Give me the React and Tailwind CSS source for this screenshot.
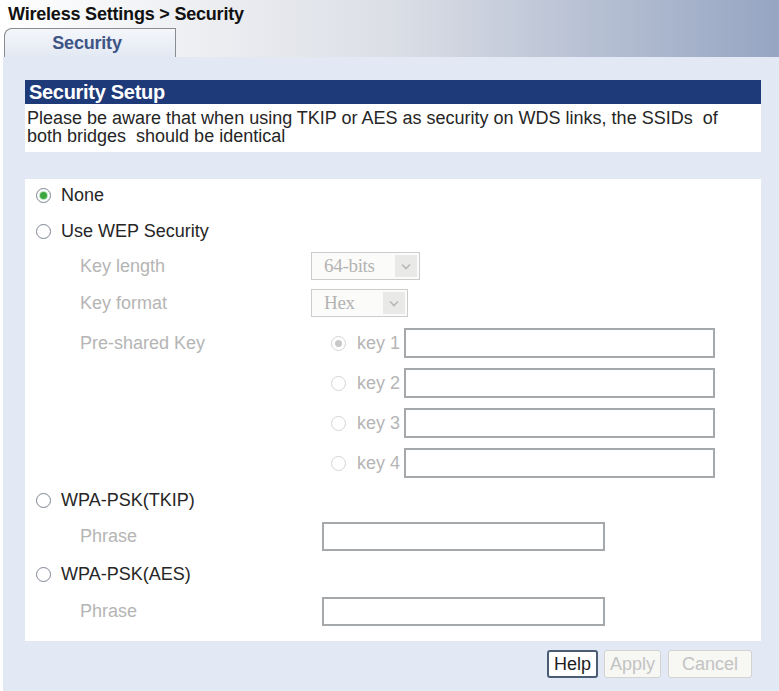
import React from 'react'

// Radio bullet, drawn with CSS so we can match the old XP look
function Radio({ checked = false, disabled = false }) {
  return (
    <span
      className={
        'flex items-center justify-center w-[15px] h-[15px] rounded-full border bg-white shrink-0 ' +
        (disabled ? 'border-[#d2d4d6]' : 'border-[#7d8593]')
      }
    >
      {checked && (
        <span
          className={
            'block w-[7px] h-[7px] rounded-full ' +
            (disabled ? 'bg-[#c9c9c9]' : 'bg-[#3da63d] shadow-[0_0_0_1px_#bfe3bf]')
          }
        />
      )}
    </span>
  )
}

function DisabledSelect({ value, width }) {
  return (
    <div className={'flex items-stretch h-[28px] border border-[#cbcccd] bg-[#fbfbf9] ' + width}>
      <span className="flex-1 flex items-center pl-[12px] font-['Liberation_Serif',serif] text-[19px] text-[#b3b3b3] tracking-[-0.3px]">
        {value}
      </span>
      <span className="flex items-center justify-center w-[22px] my-[2px] mr-[2px] bg-[#e9e9e7]">
        <svg width="10" height="7" viewBox="0 0 10 7" fill="none" stroke="#b8b8b8" strokeWidth="1.6">
          <polyline points="1,1.5 5,5.5 9,1.5" />
        </svg>
      </span>
    </div>
  )
}

function TextBox({ className = '' }) {
  return <div className={'border-2 border-[#a6a9ac] bg-white ' + className} />
}

function Option({ label, checked, className = '' }) {
  return (
    <div className={'flex items-center h-[28px] pl-[11px] gap-[10px] ' + className}>
      <Radio checked={checked} />
      <span className="text-[18px] text-[#262626]">{label}</span>
    </div>
  )
}

function KeyRow({ n, checked, className = '' }) {
  return (
    <div className={'flex items-center h-[30px] ' + className}>
      <span className="w-[306px] pl-[55px] text-[18px] text-[#b5b5b5]">{n === 1 ? 'Pre-shared Key' : ''}</span>
      <Radio checked={checked} disabled />
      <span className="ml-[11px] w-[47px] text-[18px] text-[#b5b5b5] whitespace-nowrap">key {n}</span>
      <TextBox className="w-[311px] h-[30px]" />
    </div>
  )
}

function PhraseRow({ className = '' }) {
  return (
    <div className={'flex items-center h-[29px] ' + className}>
      <span className="w-[297px] pl-[55px] text-[18px] text-[#b5b5b5]">Phrase</span>
      <TextBox className="w-[283px] h-[29px]" />
    </div>
  )
}

export default function App() {
  return (
    <div className="w-[779px] h-[691px] bg-white font-['Liberation_Sans',Arial,sans-serif] flex flex-col overflow-hidden">
      {/* Header: breadcrumb + tab over a grey-blue gradient */}
      <div className="h-[57px] bg-linear-to-r from-[#ffffff] via-[#dcdfe6] to-[#96a5c2] flex flex-col">
        <div className="h-[28px] pl-[8px] pt-[3px] text-[18px] leading-[22px] font-bold text-[#111] tracking-[-0.2px]">
          Wireless Settings &gt; Security
        </div>
        <div className="flex-1 flex items-end pl-[4px]">
          <div className="w-[172px] h-[29px] border-l border-t border-r border-[#8a8c90] rounded-tl-[8px] bg-linear-to-b from-[#f4f6fa] to-[#e3e9f3] flex items-center justify-center">
            <span className="text-[18px] font-bold text-[#3d5585] -ml-[6px] tracking-[-0.2px]">Security</span>
          </div>
        </div>
      </div>

      {/* Main panel */}
      <div className="flex-1 ml-[3px] bg-[#e2e9f4] pl-[22px] pr-[18px] pt-[23px] flex flex-col">
        <div className="h-[24px] bg-[#1f3a78] flex items-center pl-[4px]">
          <span className="text-[20px] font-bold text-white tracking-[-0.3px]">Security Setup</span>
        </div>
        <div className="bg-white px-[2px] pt-[5px] pb-[7px] text-[18px] leading-[18px] text-[#262626]">
          Please be aware that when using TKIP or AES as security on WDS links, the SSIDs&nbsp; of
          <br />
          both bridges&nbsp; should be identical
        </div>

        <div className="mt-[27px] bg-white flex flex-col pt-[2px] pb-[15px]">
          <Option label="None" checked />
          <Option label="Use WEP Security" className="mt-[8px]" />

          <div className="flex items-center h-[28px] mt-[7px]">
            <span className="w-[286px] pl-[55px] text-[18px] text-[#b5b5b5]">Key length</span>
            <DisabledSelect value="64-bits" width="w-[109px]" />
          </div>
          <div className="flex items-center h-[28px] mt-[9px]">
            <span className="w-[286px] pl-[55px] text-[18px] text-[#b5b5b5]">Key format</span>
            <DisabledSelect value="Hex" width="w-[97px]" />
          </div>

          <KeyRow n={1} checked className="mt-[11px]" />
          <KeyRow n={2} className="mt-[10px]" />
          <KeyRow n={3} className="mt-[10px]" />
          <KeyRow n={4} className="mt-[10px]" />

          <Option label="WPA-PSK(TKIP)" className="mt-[8px]" />
          <PhraseRow className="mt-[8px]" />
          <Option label="WPA-PSK(AES)" className="mt-[9px]" />
          <PhraseRow className="mt-[9px]" />
        </div>

        <div className="flex justify-end mt-[9px] pr-[9px]">
          <button className="h-[28px] px-[5px] border-2 border-[#4b5d75] rounded-[3px] bg-white text-[18px] leading-none text-[#1c1c1c]">
            Help
          </button>
          <button className="ml-[6px] h-[28px] px-[5px] border border-[#d3d4d2] rounded-[3px] bg-[#f7f7f4] text-[18px] leading-none text-[#c3c3c3]">
            Apply
          </button>
          <button className="ml-[7px] h-[28px] px-[13px] border border-[#d3d4d2] rounded-[3px] bg-[#f7f7f4] text-[18px] leading-none text-[#c3c3c3]">
            Cancel
          </button>
        </div>
      </div>
    </div>
  )
}
